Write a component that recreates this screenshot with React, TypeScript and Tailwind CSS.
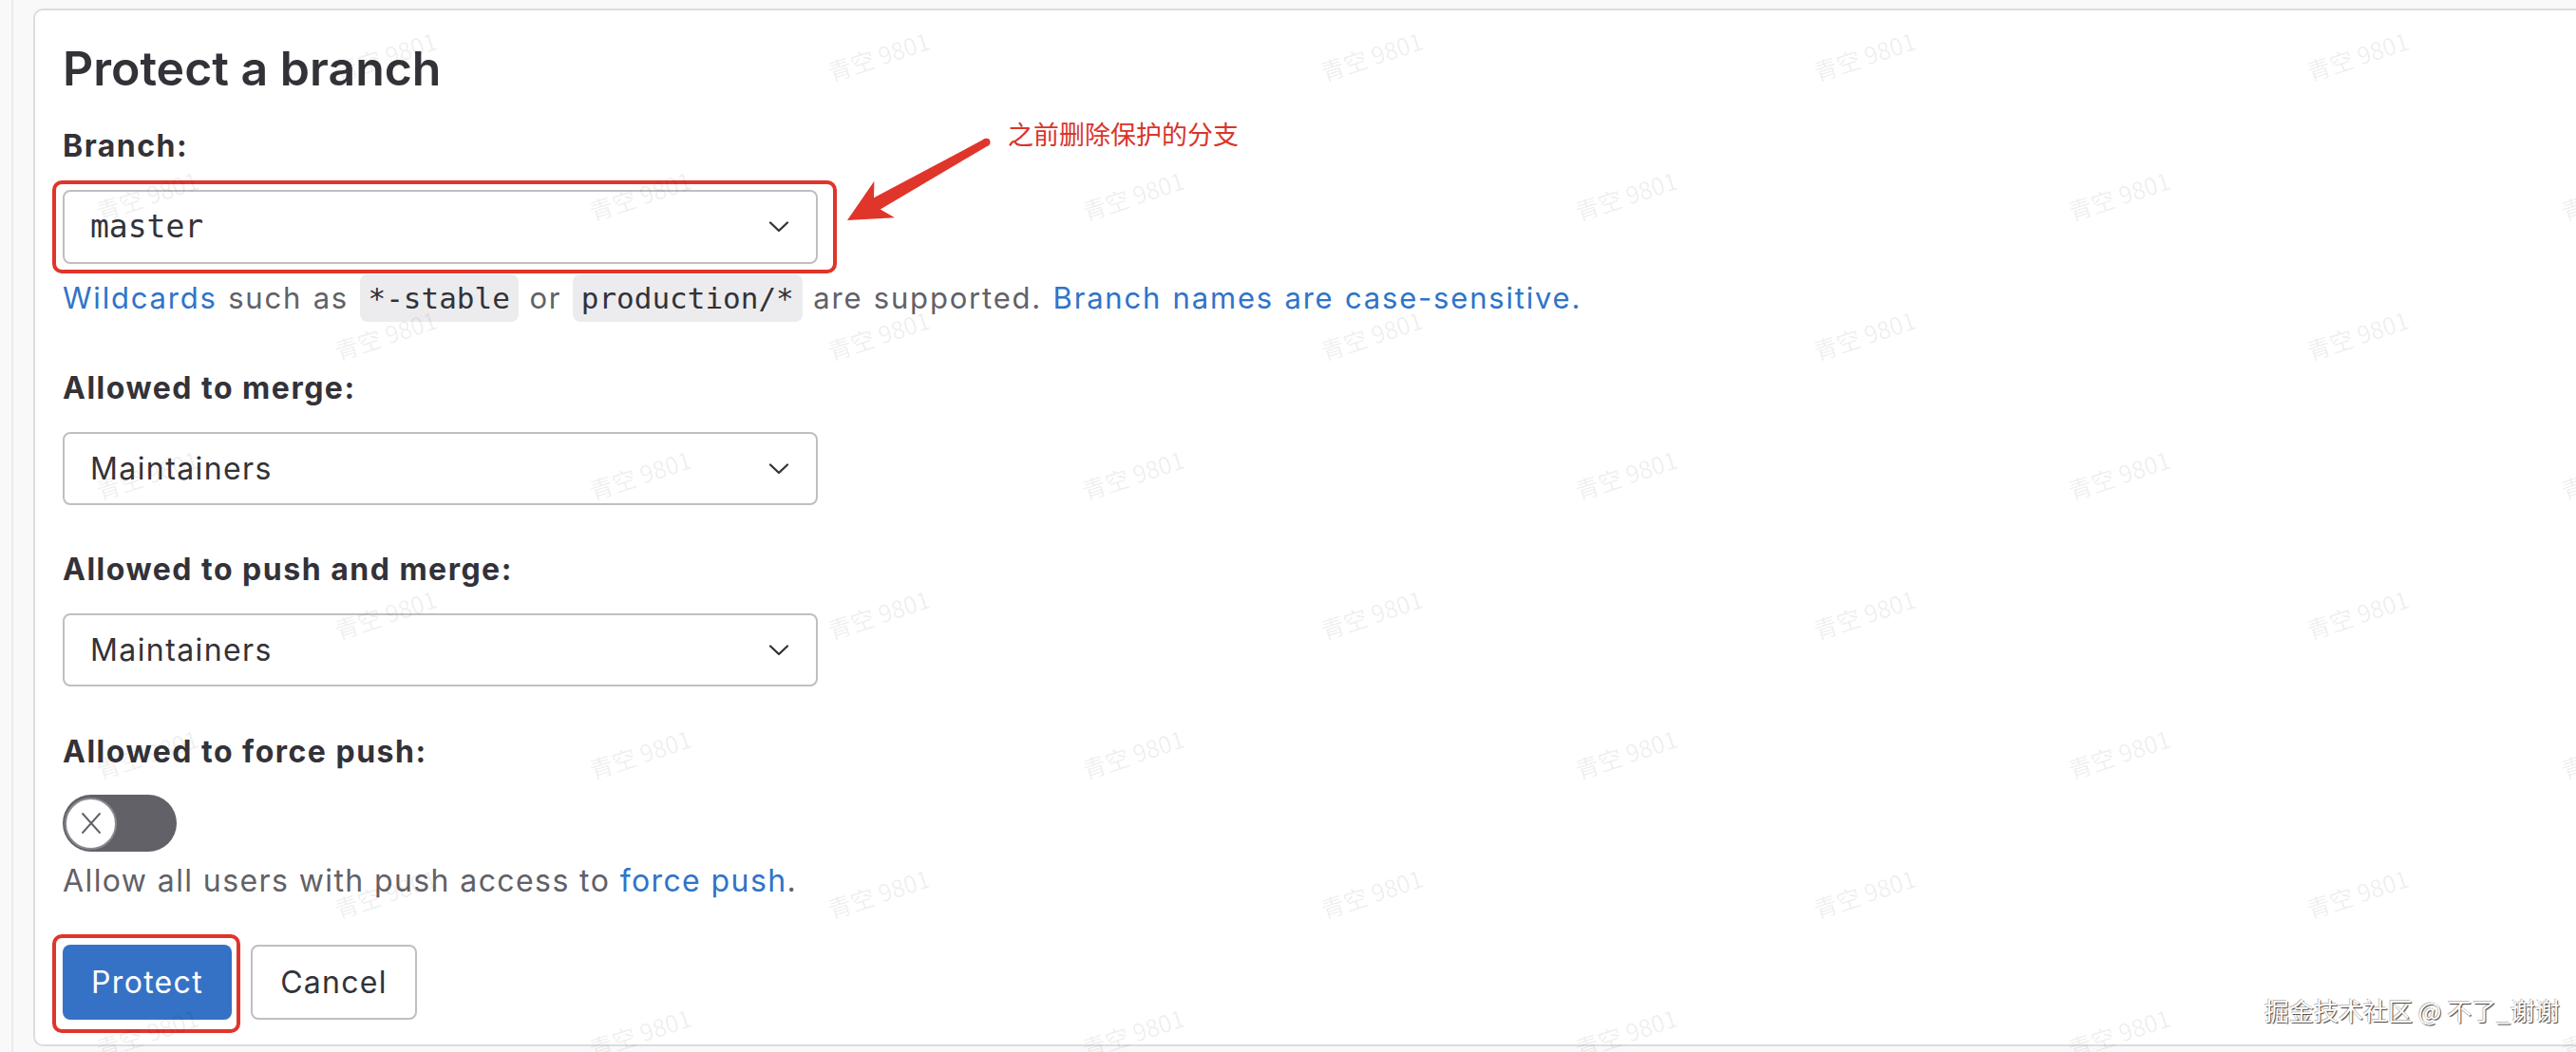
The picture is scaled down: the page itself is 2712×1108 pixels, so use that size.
import React from "react";

const marks: { x: number; y: number }[] = [];
for (let r = 0; r < 8; r++) {
  const y = 59 + r * 147;
  const x0 = r % 2 === 0 ? 406 : 155;
  for (let j = 0; j < 6; j++) {
    marks.push({ x: x0 + j * 519, y });
  }
}

function Chevron() {
  return (
    <svg width="22" height="14" viewBox="0 0 22 14" fill="none">
      <path d="M2 2.5 L11 11 L20 2.5" stroke="#333238" strokeWidth="2.3" strokeLinecap="round" strokeLinejoin="round" />
    </svg>
  );
}

function Select({ children, mono = false, h }: { children: React.ReactNode; mono?: boolean; h: string }) {
  return (
    <div
      className={`flex w-[795px] items-center justify-between rounded-[8px] border-2 border-[#bfbfc3] bg-white pl-[27px] pr-[28px] ${h}`}
    >
      <span
        className={
          mono
            ? "font-['DejaVu_Sans_Mono',monospace] text-[33px] text-[#333238]"
            : "text-[32px] tracking-[1.4px] text-[#333238]"
        }
      >
        {children}
      </span>
      <Chevron />
    </div>
  );
}

function Label({ children, className = "" }: { children: React.ReactNode; className?: string }) {
  return (
    <div className={`text-[32px] font-bold leading-[48px] tracking-[1.5px] text-[#333238] ${className}`}>{children}</div>
  );
}

function Code({ children }: { children: React.ReactNode }) {
  return (
    <code className="rounded-[8px] bg-[#ececef] px-[9px] py-[7px] font-['DejaVu_Sans_Mono',monospace] text-[31px] tracking-normal text-[#333238] [word-spacing:0px]">
      {children}
    </code>
  );
}

export default function App() {
  return (
    <div className="relative h-[1108px] w-[2712px] overflow-hidden bg-[#f9f9fa] font-['Inter',sans-serif] text-[#333238]">
      <div className="ml-[12px] h-full border-l-2 border-[#ebebec] pl-[21px] pt-[9px]">
        <div className="mr-[-20px] h-[1093px] rounded-[10px] border-2 border-[#dcdcde] bg-white pl-[29px] pt-[31px]">
          <h2 className="text-[50px] font-semibold leading-[60px] text-[#333238]">Protect a branch</h2>

          <Label className="mt-[28px]">Branch:</Label>
          <div className="relative mt-[22px] w-[795px]">
            <Select mono h="h-[78px]">master</Select>
            <div className="pointer-events-none absolute -bottom-[10px] -left-[11px] -right-[20px] -top-[10px] rounded-[10px] border-[4px] border-[#e0352b]" />
          </div>
          <div className="mt-[12px] text-[31px] leading-[48px] tracking-[1.8px] text-[#626168] [word-spacing:1px]">
            <span className="text-[#2f74c9]">Wildcards</span> such as <Code>*-stable</Code> or{" "}
            <Code>production/*</Code> are supported.{" "}
            <span className="text-[#2f74c9]">Branch names are case-sensitive.</span>
          </div>

          <Label className="mt-[47px]">Allowed to merge:</Label>
          <div className="mt-[22px]">
            <Select h="h-[77px]">Maintainers</Select>
          </div>

          <Label className="mt-[44px]">Allowed to push and merge:</Label>
          <div className="mt-[22px]">
            <Select h="h-[77px]">Maintainers</Select>
          </div>

          <Label className="mt-[45px]">Allowed to force push:</Label>
          <div className="mt-[21px] flex h-[60px] w-[120px] items-center rounded-full bg-[#626168] pl-[2px]">
            <div className="flex h-[55px] w-[55px] items-center justify-center rounded-full border-2 border-[#89888d] bg-white">
              <svg width="28" height="28" viewBox="0 0 28 28" fill="none">
                <path d="M5 4 L23 24 M23 4 L5 24" stroke="#626168" strokeWidth="1.9" strokeLinecap="round" />
              </svg>
            </div>
          </div>
          <div className="mt-[7px] text-[32px] leading-[48px] tracking-[1.4px] text-[#626168]">
            Allow all users with push access to <span className="text-[#2f74c9]">force push</span>.
          </div>

          <div className="mt-[43px] flex gap-[20px]">
            <div className="relative">
              <button className="h-[79px] w-[178px] rounded-[8px] bg-[#3572c6] text-[32px] tracking-[1.3px] text-white">
                Protect
              </button>
              <div className="pointer-events-none absolute -bottom-[14px] -left-[11px] -right-[9px] -top-[11px] rounded-[10px] border-[4px] border-[#e0352b]" />
            </div>
            <button className="h-[79px] w-[175px] rounded-[8px] border-2 border-[#bfbfc3] bg-white text-[32px] tracking-[1.3px] text-[#333238]">
              Cancel
            </button>
          </div>
        </div>
      </div>

      {/* watermarks */}
      <div className="pointer-events-none absolute inset-0">
        {marks.map((m, i) => (
          <div
            key={i}
            className="absolute -translate-x-1/2 -translate-y-1/2 -rotate-[18deg] whitespace-nowrap font-['Noto_Sans_CJK_SC',sans-serif] text-[25px] text-black/[0.07]"
            style={{ left: m.x, top: m.y }}
          >
            青空 9801
          </div>
        ))}
      </div>

      {/* annotation arrow */}
      <svg className="pointer-events-none absolute left-[880px] top-[130px]" width="180" height="120" viewBox="0 0 180 120">
        <polygon
          points="12,102 40.4,60.8 40,78.3 156.5,16.3 160.5,23.3 46.8,90.5 62,99.2"
          fill="#e0352b"
        />
        <circle cx="158.5" cy="19.8" r="4" fill="#e0352b" />
      </svg>
      <div className="pointer-events-none absolute left-[1061px] top-[121px] font-['Noto_Sans_CJK_SC',sans-serif] text-[27px] leading-[40px] text-[#d9352b]">
        之前删除保护的分支
      </div>

      <div className="pointer-events-none absolute left-[2384px] top-[1046px] font-['Noto_Sans_CJK_SC',sans-serif] text-[26px] leading-[36px] text-white [text-shadow:1px_1px_1px_rgba(0,0,0,0.75),-1px_-1px_0_rgba(0,0,0,0.25)]">
        掘金技术社区 @ 不了_谢谢
      </div>
    </div>
  );
}
